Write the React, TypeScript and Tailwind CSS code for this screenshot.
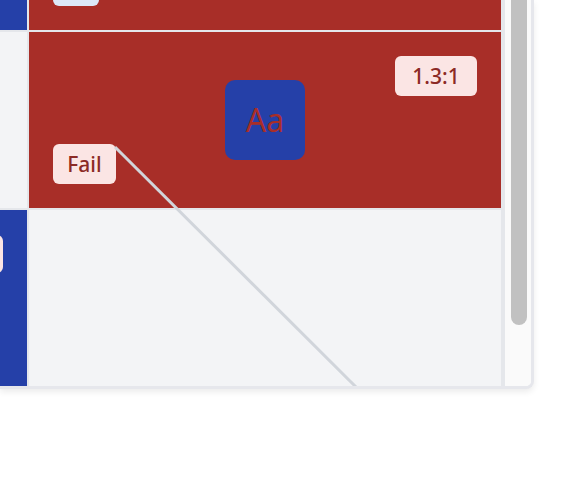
import React from "react";

type Badge = { label?: string; className: string };

type Cell = {
  bg: string;
  tile?: boolean;
  ratio?: string;
  verdict?: Badge;
  corner?: Badge;
};

const font = { fontFamily: '"Noto Sans", "Open Sans", sans-serif' };

// row 1 and col 1 are scrolled mostly out of view, so their badges show only an edge
const rows: Cell[][] = [
  [
    { bg: "bg-[#2540a8]" },
    { bg: "bg-[#a82e28]", verdict: { className: "bg-[#dde8f8] w-[46px]" } },
  ],
  [
    { bg: "bg-[#f3f4f6]" },
    {
      bg: "bg-[#a82e28]",
      tile: true,
      ratio: "1.3:1",
      verdict: { label: "Fail", className: "bg-[#fbe5e4] text-[#8c2a25] w-[63px]" },
    },
  ],
  [
    { bg: "bg-[#2540a8]", corner: { className: "bg-[#fbe5e4] w-[82px]" } },
    { bg: "bg-[#f3f4f6]" },
  ],
];

function MatrixCell({ cell }: { cell: Cell }) {
  return (
    <div className={`relative flex items-center justify-center ${cell.bg}`}>
      {cell.tile && (
        <div className="flex h-20 w-20 items-center justify-center rounded-[10px] bg-[#2540a8]">
          <span className="text-[32px] leading-none text-[#a82e28]">Aa</span>
        </div>
      )}
      {cell.ratio && (
        <span className="absolute right-6 top-6 h-10 w-[82px] rounded-md bg-[#fbe5e4] text-center text-[21px] font-medium leading-10 text-[#8c2a25]">
          {cell.ratio}
        </span>
      )}
      {cell.corner && (
        <span className={`absolute right-6 top-[25px] h-[38px] rounded-md ${cell.corner.className}`}>
          {cell.corner.label}
        </span>
      )}
      {cell.verdict && (
        <span className={`absolute bottom-6 left-6 h-10 rounded-md text-center text-[21px] font-medium leading-10 ${cell.verdict.className}`}>
          {cell.verdict.label}
        </span>
      )}
    </div>
  );
}

export default function App() {
  return (
    <div className="h-[502px] w-[576px] overflow-hidden bg-white" style={font}>
      <div className="flex h-[389px] w-[534px] overflow-hidden rounded-br-lg border-b-[3px] border-r-[3px] border-[#e6e7ec] bg-white shadow-[0_3px_6px_rgba(0,0,0,0.08)]">
        <div className="relative h-[386px] w-[505px] overflow-hidden bg-[#e5e7eb]">
          <div className="-ml-[445px] -mt-[146px] grid grid-cols-[472px_472px] grid-rows-[176px_176px_176px] gap-[2px]">
            {rows.map((row, r) =>
              row.map((cell, c) => <MatrixCell key={`${r}-${c}`} cell={cell} />)
            )}
          </div>
          <svg className="pointer-events-none absolute inset-0" width="505" height="386">
            <line x1="115" y1="147" x2="356" y2="387" stroke="#d1d5db" strokeWidth="3" />
          </svg>
        </div>
        <div className="h-[386px] w-[26px] bg-[#fafafa] pl-[6px]">
          <div className="h-[325px] w-4 rounded-b-full bg-[#c1c1c1]" />
        </div>
      </div>
    </div>
  );
}
